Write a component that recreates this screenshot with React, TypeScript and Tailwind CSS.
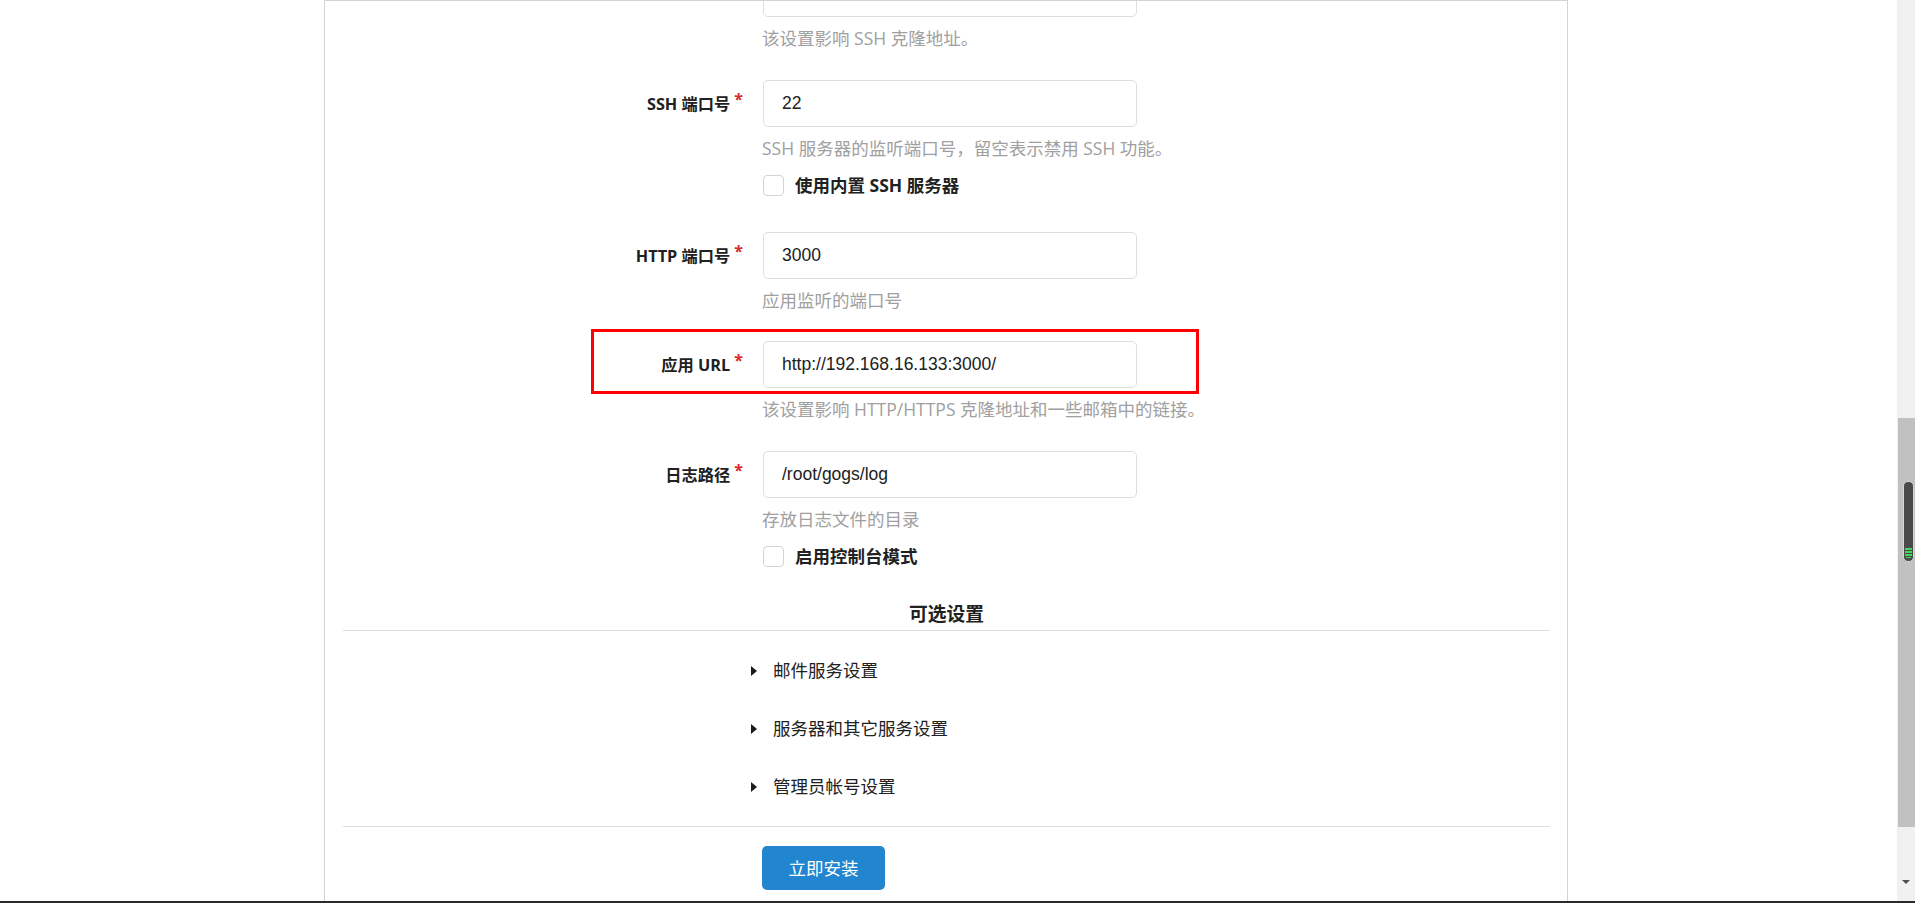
import React from 'react';

const sans = "font-['Open_Sans','Noto_Sans_CJK_SC',sans-serif]";

interface FieldProps {
  label?: string;
  value: string;
  marked?: boolean;
  className?: string;
}

const Field = ({ label, value, marked, className = '' }: FieldProps) => (
  <div className={`relative flex h-[47px] items-center ${className}`}>
    <label className={`flex w-[400px] items-start justify-end text-[16.25px] font-bold leading-[22px] text-[#212121] ${sans}`}>
      {label && (
        <>
          {label}
          <span className="ml-[4px] -mt-[2px] text-[16px] leading-[16px] text-[#db2828]">*</span>
        </>
      )}
    </label>
    <input
      readOnly
      value={value}
      className="ml-[20px] h-[47px] w-[374px] rounded-[5px] border border-[#dededf] bg-white px-[18px] font-['Liberation_Sans',Arial,sans-serif] text-[17.5px] text-[#212121] outline-none"
    />
    {marked && (
      <div className="pointer-events-none absolute left-[248px] top-[-12px] h-[65px] w-[608px] border-[3px] border-[#ff0000]" />
    )}
  </div>
);

const Help = ({ text }: { text: string }) => (
  <p className={`ml-[419px] mt-[9px] h-[25px] text-[17.5px] leading-[25px] text-[#a0a0a0] ${sans}`}>{text}</p>
);

const Check = ({ text }: { text: string }) => (
  <div className="ml-[420px] mt-[13px] flex h-[22px] items-center">
    <div className="h-[21px] w-[21px] rounded-[4px] border border-[#d4d4d5] bg-white" />
    <span className={`ml-[11px] text-[17.5px] font-bold leading-[22px] text-[#212121] ${sans}`}>{text}</span>
  </div>
);

const Toggle = ({ text, className = '' }: { text: string; className?: string }) => (
  <div className={`ml-[408px] flex h-[25px] items-center ${className}`}>
    <div className="h-0 w-0 border-y-[5px] border-l-[6px] border-y-transparent border-l-[#1b1c1d]" />
    <span className={`ml-[16px] text-[17.5px] leading-[25px] text-[#212121] ${sans}`}>{text}</span>
  </div>
);

const App = () => {
  return (
    <div className="flex h-[903px] w-[1915px] flex-col overflow-hidden bg-white">
      <div className="flex h-[901px]">
        <div className="h-full flex-1">
          <div className="ml-[324px] h-full w-[1244px] border-x border-t border-[#d4d4d5] bg-white">
            <div className="h-full overflow-hidden pl-[18px] pr-[17px]">
              <div className="-mt-[31px]">
                <Field value="192.168.16.133" />
                <Help text="该设置影响 SSH 克隆地址。" />

                <Field label="SSH 端口号" value="22" className="mt-[29px]" />
                <Help text="SSH 服务器的监听端口号，留空表示禁用 SSH 功能。" />
                <Check text="使用内置 SSH 服务器" />

                <Field label="HTTP 端口号" value="3000" className="mt-[36px]" />
                <Help text="应用监听的端口号" />

                <Field label="应用 URL" value="http://192.168.16.133:3000/" marked className="mt-[28px]" />
                <Help text="该设置影响 HTTP/HTTPS 克隆地址和一些邮箱中的链接。" />

                <Field label="日志路径" value="/root/gogs/log" className="mt-[29px]" />
                <Help text="存放日志文件的目录" />
                <Check text="启用控制台模式" />

                <h4 className={`mt-[34px] border-b border-[#dededf] pb-[3px] text-center text-[18.75px] font-bold leading-[26px] text-[#212121] ${sans}`}>
                  可选设置
                </h4>

                <Toggle text="邮件服务设置" className="mt-[27px]" />
                <Toggle text="服务器和其它服务设置" className="mt-[33px]" />
                <Toggle text="管理员帐号设置" className="mt-[33px]" />

                <div className="mt-[27px] border-t border-[#dededf]" />

                <button className={`ml-[419px] mt-[19px] h-[44px] w-[123px] rounded-[5px] bg-[#2185d0] text-[17.5px] text-white ${sans}`}>
                  立即安装
                </button>
              </div>
            </div>
          </div>
        </div>

        <div className="flex h-full w-[18px] flex-col bg-[#f1f1f1]">
          <div className="h-[418px]" />
          <div className="relative ml-[1px] h-[409px] bg-[#c1c1c1]">
            <div className="absolute left-[5px] top-[63px] flex h-[81px] w-[11px] flex-col items-center justify-end gap-[1px] rounded-[5px] border border-[#d8d8d8] bg-[#4a4a4a] pb-[3px]">
              <div className="h-[2px] w-[7px] bg-[#3fd95a]" />
              <div className="h-[2px] w-[7px] bg-[#3fd95a]" />
              <div className="h-[2px] w-[7px] bg-[#3fd95a]" />
              <div className="h-[1px] w-[5px] bg-[#3fd95a]" />
            </div>
          </div>
          <div className="ml-[5px] mt-[53px] h-0 w-0 border-x-[4.5px] border-t-[4px] border-x-transparent border-t-[#505050]" />
        </div>
      </div>
      <div className="h-[2px] w-full bg-[#2b2b2b]" />
    </div>
  );
};

export default App;
